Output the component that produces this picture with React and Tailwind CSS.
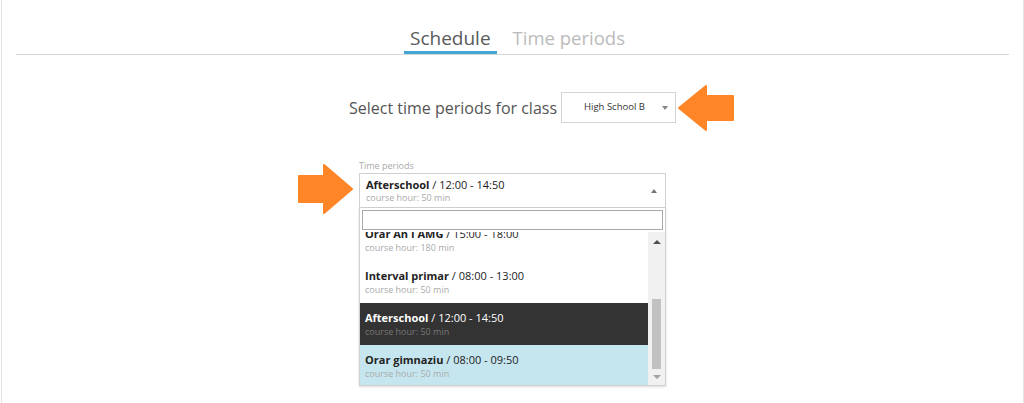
import React from 'react';

const font = { fontFamily: '"Open Sans", "Noto Sans", sans-serif' };

const periods = [
  { name: 'Orar An I AMG', time: '15:00 - 18:00', hour: 180 },
  { name: 'Interval primar', time: '08:00 - 13:00', hour: 50 },
  { name: 'Afterschool', time: '12:00 - 14:50', hour: 50, selected: true },
  { name: 'Orar gimnaziu', time: '08:00 - 09:50', hour: 50, hover: true },
];

const ArrowLeft = ({ className }) => (
  <svg className={className} width="58" height="48" viewBox="0 0 58 48">
    <polygon
      points="2,24 29,2 29,12 56,12 56,36 29,36 29,46"
      fill="#ff8527"
      stroke="#ff8527"
      strokeWidth="2"
      strokeLinejoin="round"
    />
  </svg>
);

const ArrowRight = ({ className }) => (
  <svg className={className} width="58" height="52" viewBox="0 0 58 52">
    <polygon
      points="55,26 27,2 27,13 2,13 2,39 27,39 27,50"
      fill="#ff8527"
      stroke="#ff8527"
      strokeWidth="2"
      strokeLinejoin="round"
    />
  </svg>
);

const Row = ({ p }) => {
  let bg = 'bg-white';
  let title = 'text-[#222]';
  let sub = 'text-[#aaa]';
  if (p.selected) {
    bg = 'bg-[#333333]';
    title = 'text-white';
    sub = 'text-[#777]';
  } else if (p.hover) {
    bg = 'bg-[#c6e6ef]';
  }
  return (
    <div className={`${bg} px-[5px] py-[7px]`}>
      <div className={`text-[11px] leading-[15px] ${title}`}>
        <span className="font-bold">{p.name}</span> / {p.time}
      </div>
      <div className={`text-[9px] leading-[13px] ${sub}`}>course hour: {p.hour} min</div>
    </div>
  );
};

export default function App() {
  return (
    <div className="h-[403px] bg-white pl-px overflow-hidden" style={font}>
      <div className="h-full border-x border-[#e4e4e4] px-[14px]">
        {/* tabs */}
        <div className="flex justify-center gap-[10px] border-b border-[#d6d6d6] pt-[25px] pl-[10px]">
          <div className="px-[6px] border-b-[3px] border-[#45a6d6] text-[19px] leading-[26px] text-[#5a5a5a]">
            Schedule
          </div>
          <div className="px-[6px] border-b-[3px] border-transparent text-[18.5px] leading-[26px] text-[#bbb]">
            Time periods
          </div>
        </div>

        {/* class select */}
        <div className="flex justify-center items-center gap-[4px] mt-[37px]">
          <span className="text-[16px] text-[#555]">Select time periods for class</span>
          <div className="relative">
            <div className="w-[115px] h-[31px] border border-[#d4d4d4] bg-white flex items-center pl-[22px] pr-[7px] text-[9.5px] text-[#333]">
              <span className="flex-1">High School B</span>
              <span className="w-0 h-0 border-l-[3px] border-r-[3px] border-t-[4px] border-l-transparent border-r-transparent border-t-[#888]" />
            </div>
            <ArrowLeft className="absolute left-[116px] top-[-8px]" />
          </div>
        </div>

        {/* time periods */}
        <div className="w-[307px] mx-auto mt-[36px]">
          <div className="text-[9px] leading-[14px] text-[#aaa]">Time periods</div>
          <div className="relative">
            <ArrowRight className="absolute left-[-62px] top-[-10px]" />
            <div className="h-[35px] border border-[#d0d0d0] flex items-center pl-[6px] pr-[8px]">
              <div className="flex-1">
                <div className="text-[11px] leading-[14px] text-[#222]">
                  <span className="font-bold">Afterschool</span> / 12:00 - 14:50
                </div>
                <div className="text-[9px] leading-[12px] text-[#aaa]">course hour: 50 min</div>
              </div>
              <span className="w-0 h-0 border-l-[3px] border-r-[3px] border-b-[4px] border-l-transparent border-r-transparent border-b-[#777]" />
            </div>
            <div className="border border-t-0 border-[#d0d0d0] shadow-[0_1px_2px_rgba(0,0,0,0.15)]">
              <div className="p-[2px]">
                <div className="h-[20px] border border-[#aaa] bg-white" />
              </div>
              <div className="flex h-[153px]">
                <div className="flex-1 overflow-hidden">
                  <div className="-mt-[13px]">
                    {periods.map((p) => (
                      <Row key={p.name} p={p} />
                    ))}
                  </div>
                </div>
                <div className="w-[17px] bg-[#f1f1f1] flex flex-col items-center">
                  <div className="h-[20px] flex items-center justify-center">
                    <span className="w-0 h-0 border-l-[4px] border-r-[4px] border-b-[4px] border-l-transparent border-r-transparent border-b-[#505050]" />
                  </div>
                  <div className="h-[47px]" />
                  <div className="w-[9px] h-[70px] bg-[#c1c1c1]" />
                  <div className="flex-1 flex items-center justify-center">
                    <span className="w-0 h-0 border-l-[4px] border-r-[4px] border-t-[4px] border-l-transparent border-r-transparent border-t-[#a3a3a3]" />
                  </div>
                </div>
              </div>
            </div>
          </div>
        </div>
      </div>
    </div>
  );
}
